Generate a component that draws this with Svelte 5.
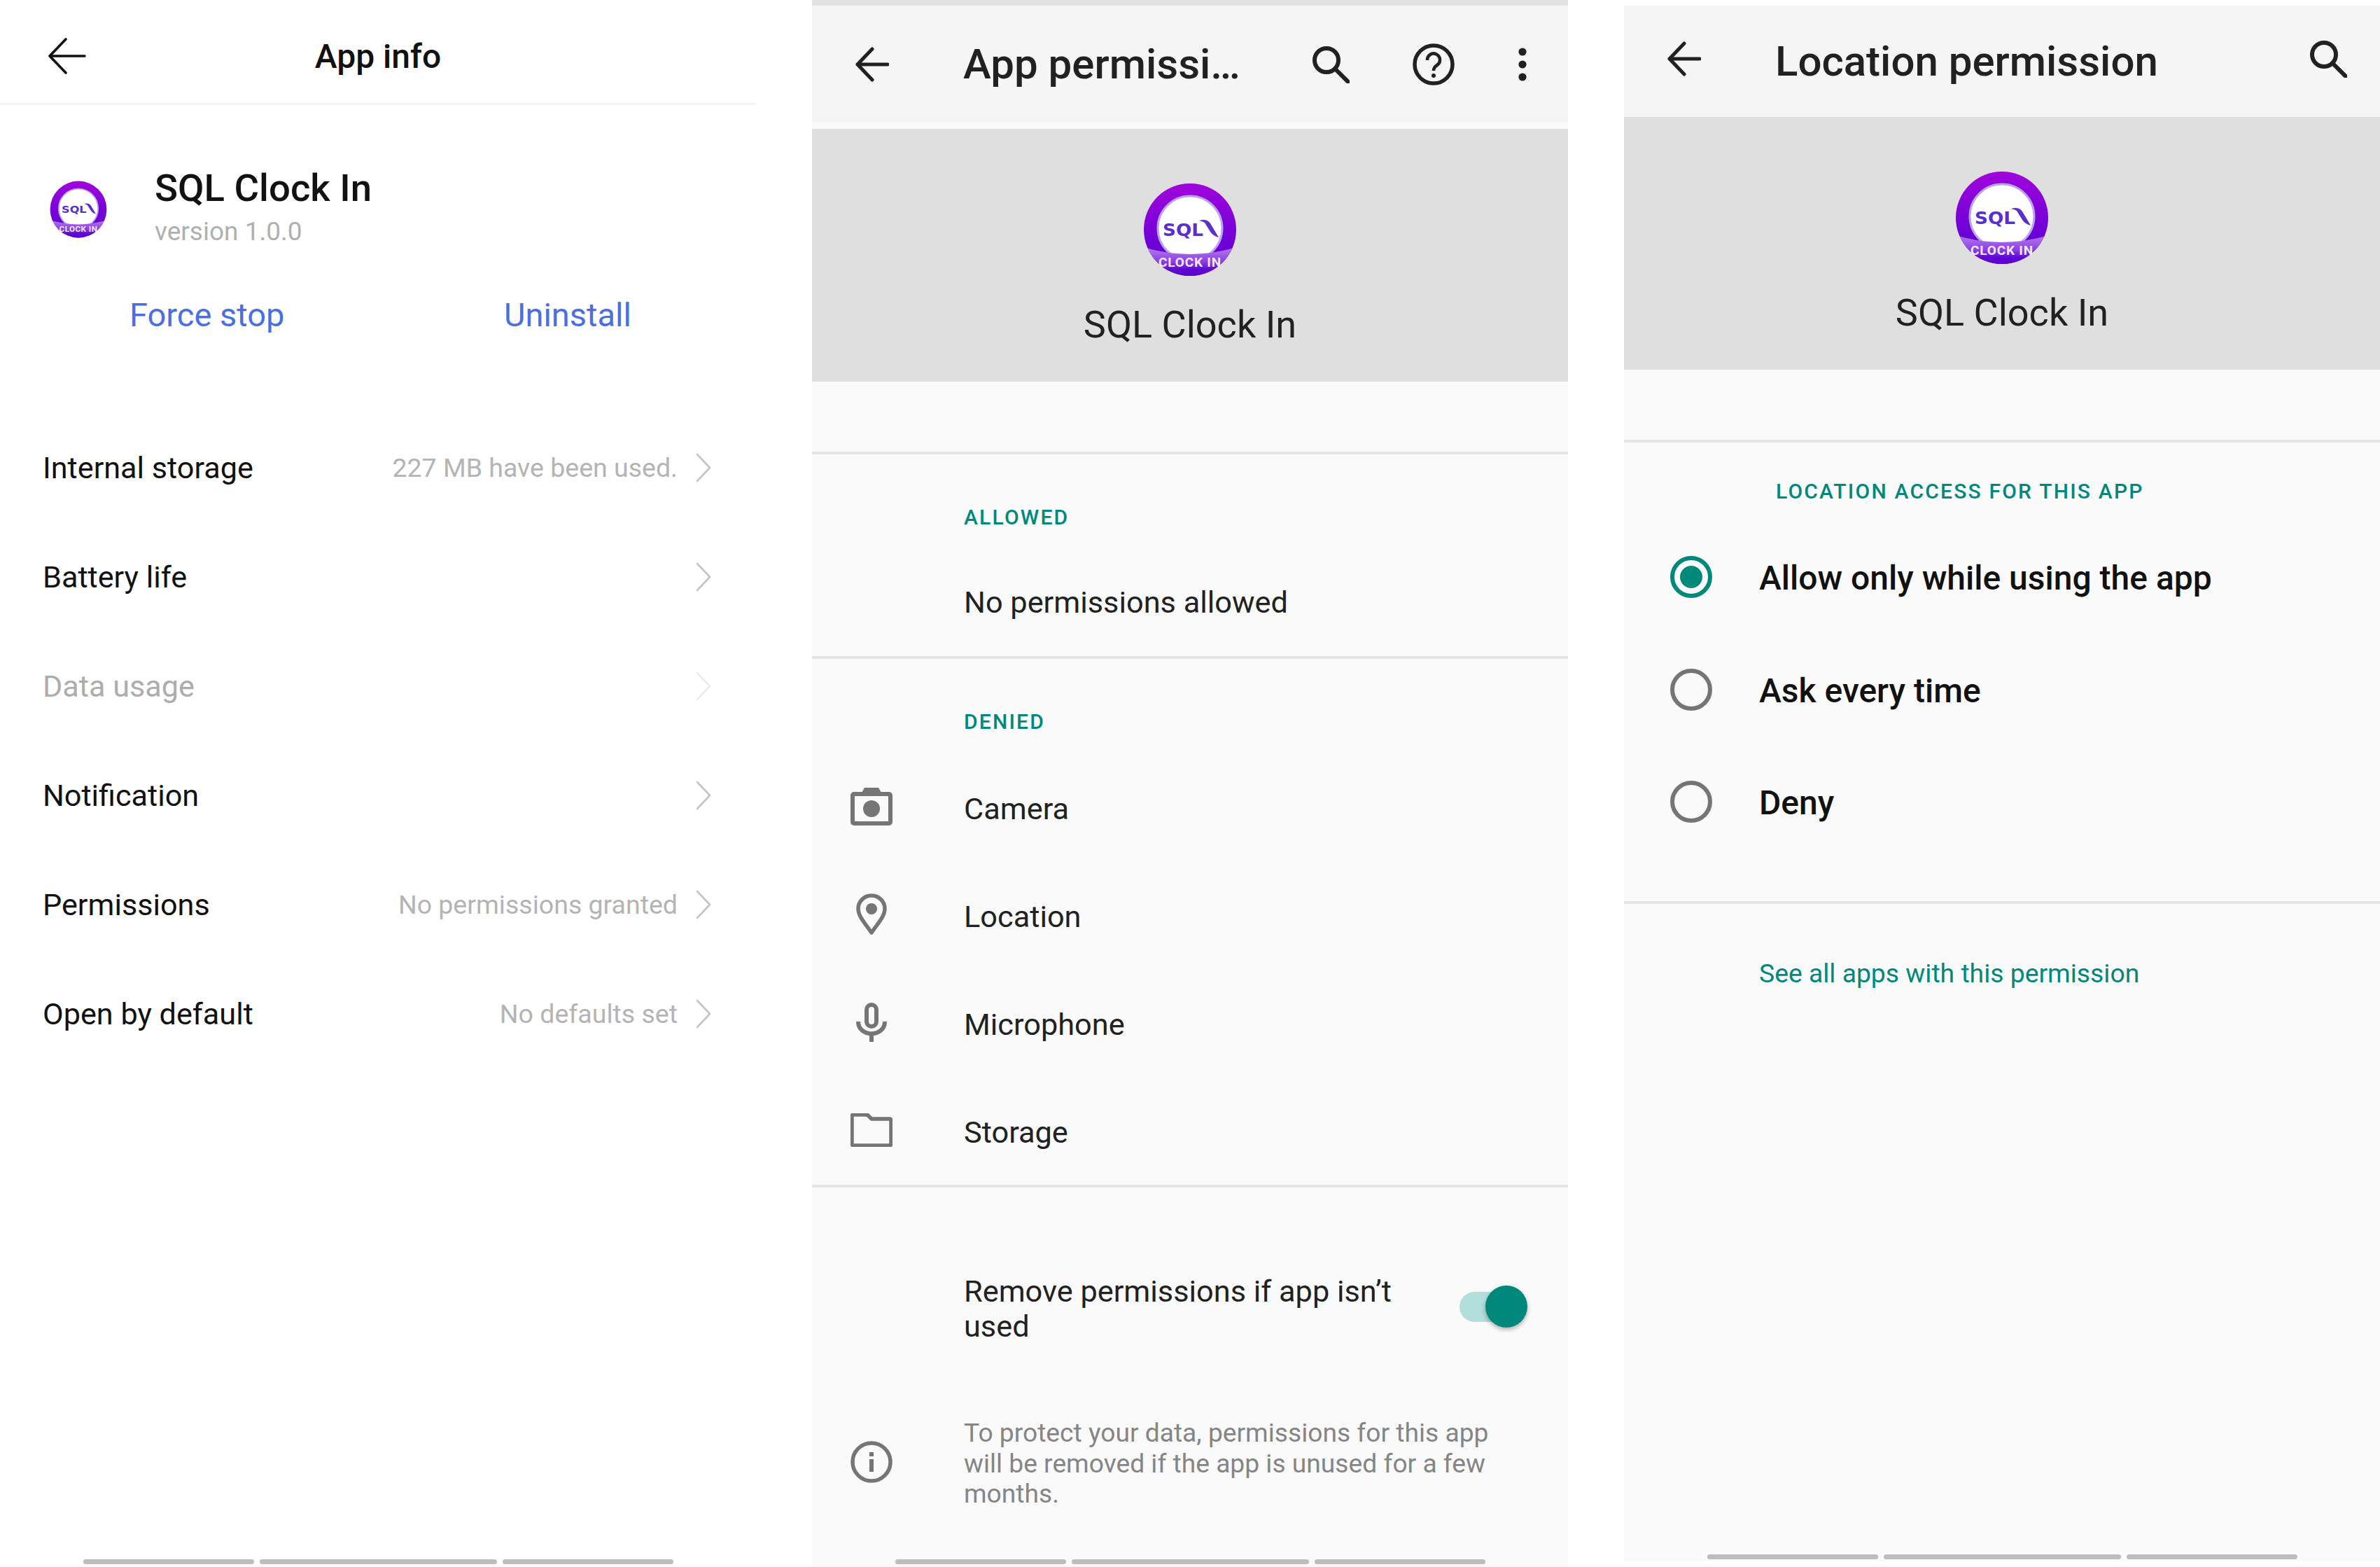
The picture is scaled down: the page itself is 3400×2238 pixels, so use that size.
<script>
  const infoRows = [
    { label: 'Internal storage', value: '227 MB have been used.' },
    { label: 'Battery life' },
    { label: 'Data usage', disabled: true },
    { label: 'Notification' },
    { label: 'Permissions', value: 'No permissions granted' },
    { label: 'Open by default', value: 'No defaults set' },
  ]

  const denied = ['Camera', 'Location', 'Microphone', 'Storage']
  const radios = ['Allow only while using the app', 'Ask every time', 'Deny']
</script>

{#snippet logo(cls)}
  <svg class={cls} viewBox="0 0 134 134" aria-hidden="true">
    <defs>
      <linearGradient id="ring" x1="0" y1="0" x2="0" y2="1">
        <stop offset="0" stop-color="#a005dc" />
        <stop offset="0.7" stop-color="#6a00d6" />
        <stop offset="1" stop-color="#5a00d0" />
      </linearGradient>
      <linearGradient id="band" x1="0" y1="0" x2="0" y2="1">
        <stop offset="0" stop-color="#b47cec" />
        <stop offset="0.5" stop-color="#8a3fe2" />
        <stop offset="0.75" stop-color="#5f08d4" />
        <stop offset="1" stop-color="#5a00d0" />
      </linearGradient>
      <clipPath id="disc"><circle cx="67" cy="67" r="66" /></clipPath>
    </defs>
    <circle cx="67" cy="67" r="66" fill="url(#ring)" />
    <circle cx="67" cy="65" r="46" fill="#fff" stroke="#b9a4ee" stroke-width="3" />
    <path d="M0 92 Q67 112 134 92 V134 H0 Z" fill="url(#band)" clip-path="url(#disc)" />
    <text x="28" y="76" textLength="58" lengthAdjust="spacingAndGlyphs" class="logo-sql">SQL</text>
    <path d="M80 54 Q91 51 96 58 L108 78 Q100 76 96 70 L88 57 Q85 55 80 54 Z" fill="#5a2fd0" />
    <text x="67" y="120" text-anchor="middle" class="logo-clock">CLOCK IN</text>
  </svg>
{/snippet}

{#snippet search()}
  <svg class="tool search" viewBox="0 0 54 54" fill="none" stroke="#212121" stroke-width="6" stroke-linecap="round">
    <circle cx="21" cy="21" r="17" />
    <path d="M33 33 L52 52" />
  </svg>
{/snippet}

{#snippet back(cls)}
  <svg class={cls} viewBox="0 0 48 50" fill="none" stroke="#212121" stroke-width="5" stroke-linecap="round" stroke-linejoin="round">
    <path d="M24 3 L3 25 L24 47 M3 25 H46" />
  </svg>
{/snippet}

{#snippet navbar()}
  <div class="nav">
    <span class="seg side"></span>
    <span class="seg mid"></span>
    <span class="seg side"></span>
  </div>
{/snippet}

<div class="screens">
  <!-- App info -->
  <section class="panel info">
    <header class="info-head">
      <svg class="info-back" viewBox="0 0 54 52" fill="none" stroke="#111" stroke-width="3.6" stroke-linecap="round" stroke-linejoin="round">
        <path d="M25 2 L2 26 L25 50 M2 26 H52" />
      </svg>
      <h1>App info</h1>
    </header>

    <div class="app-row">
      {@render logo('logo-small')}
      <div>
        <div class="app-name">SQL Clock In</div>
        <div class="app-version">version 1.0.0</div>
      </div>
    </div>

    <div class="actions">
      <span class="force">Force stop</span>
      <span class="uninstall">Uninstall</span>
    </div>

    <ul class="info-list">
      {#each infoRows as row}
        <li class:disabled={row.disabled}>
          <span class="label">{row.label}</span>
          {#if row.value}<span class="value">{row.value}</span>{/if}
          <svg class="chev" viewBox="0 0 22 42" fill="none" stroke="currentColor" stroke-width="2.6" stroke-linecap="round" stroke-linejoin="round">
            <path d="M2 2 L20 21 L2 40" />
          </svg>
        </li>
      {/each}
    </ul>

    {@render navbar()}
  </section>

  <!-- App permissions -->
  <section class="panel perms">
    <header class="bar">
      {@render back('bar-back')}
      <h2>App permissi…</h2>
      <div class="tools">
        {@render search()}
        <svg class="tool help" viewBox="0 0 60 60" fill="none" stroke="#212121" stroke-width="5.5">
          <circle cx="30" cy="30" r="27" />
          <path d="M21 24 A9 9 0 1 1 35 31 Q30 34 30 39" stroke-width="4.6" />
          <circle cx="30" cy="46" r="3" fill="#212121" stroke="none" />
        </svg>
        <svg class="tool dots" viewBox="0 0 14 48" fill="#212121">
          <circle cx="7" cy="6" r="5.6" />
          <circle cx="7" cy="24" r="5.6" />
          <circle cx="7" cy="42" r="5.6" />
        </svg>
      </div>
    </header>

    <div class="hero">
      {@render logo('logo-big')}
      <div class="hero-name">SQL Clock In</div>
    </div>

    <div class="group allowed">
      <div class="caption">ALLOWED</div>
      <div class="empty">No permissions allowed</div>
    </div>

    <div class="group denied">
      <div class="caption">DENIED</div>
      <ul class="perm-list">
        {#each denied as name}
          <li>
            <span class="perm-icon">
              {#if name === 'Camera'}
                <svg width="60" height="54" viewBox="0 0 60 54" fill="none">
                  <path d="M16 7 L20 0 H40 L44 7 Z" fill="#757575" />
                  <rect x="3" y="9" width="54" height="42" rx="2" stroke="#757575" stroke-width="6" />
                  <circle cx="30" cy="30" r="12" fill="#757575" />
                </svg>
              {:else if name === 'Location'}
                <svg width="44" height="60" viewBox="0 0 44 60" fill="none">
                  <path d="M22 56 C14 44 3 33 3 22 A19 19 0 0 1 41 22 C41 33 30 44 22 56 Z" stroke="#757575" stroke-width="5.5" stroke-linejoin="round" />
                  <circle cx="22" cy="22" r="8" fill="#757575" />
                </svg>
              {:else if name === 'Microphone'}
                <svg width="44" height="56" viewBox="0 0 44 56" fill="none" stroke="#757575" stroke-width="6">
                  <rect x="15" y="3" width="14" height="31" rx="7" />
                  <path d="M3 27 C3 50 41 50 41 27 M22 43 V56" />
                </svg>
              {:else}
                <svg width="60" height="48" viewBox="0 0 60 48" fill="none">
                  <path d="M4 2 H24 L30 8 H56 A2 2 0 0 1 58 10 V44 A2 2 0 0 1 56 46 H4 A2 2 0 0 1 2 44 V4 A2 2 0 0 1 4 2 Z" stroke="#757575" stroke-width="5.5" stroke-linejoin="round" />
                </svg>
              {/if}
            </span>
            <span class="perm-name">{name}</span>
          </li>
        {/each}
      </ul>
    </div>

    <div class="auto-remove">
      <div class="auto-text">Remove permissions if app isn’t used</div>
      <div class="toggle"><span class="knob"></span></div>
    </div>

    <div class="note">
      <svg class="note-icon" viewBox="0 0 60 60" fill="none">
        <circle cx="30" cy="30" r="27" stroke="#757575" stroke-width="5.5" />
        <rect x="27" y="26" width="6" height="18" fill="#757575" />
        <rect x="27" y="16" width="6" height="6" fill="#757575" />
      </svg>
      <p>To protect your data, permissions for this app will be removed if the app is unused for a few months.</p>
    </div>

    {@render navbar()}
  </section>

  <!-- Location permission -->
  <section class="panel location">
    <header class="bar">
      {@render back('bar-back')}
      <h2>Location permission</h2>
      <div class="tools">{@render search()}</div>
    </header>

    <div class="hero">
      {@render logo('logo-big')}
      <div class="hero-name">SQL Clock In</div>
    </div>

    <div class="group radios">
      <div class="caption">LOCATION ACCESS FOR THIS APP</div>
      <ul class="radio-list">
        {#each radios as text, i}
          <li>
            <span class="radio" class:on={i === 0}></span>
            <span class="radio-text">{text}</span>
          </li>
        {/each}
      </ul>
    </div>

    <a class="see-all" href="#apps">See all apps with this permission</a>

    {@render navbar()}
  </section>
</div>

<style>
  :global(body) {
    margin: 0;
    background: #fff;
  }

  .screens {
    display: flex;
    width: 3400px;
    height: 2238px;
    font-family: Roboto, 'Liberation Sans', sans-serif;
    overflow: hidden;
  }

  .panel {
    position: relative;
    display: flex;
    flex-direction: column;
    box-sizing: border-box;
  }

  h1, h2, p {
    margin: 0;
    font-weight: 500;
  }

  ul {
    margin: 0;
    padding: 0;
    list-style: none;
  }

  /* ── Bottom nav pill ─────────────────────────────────────────────────── */
  .nav {
    position: absolute;
    left: 0;
    right: 0;
    display: flex;
    justify-content: center;
    gap: 8px;
  }

  .seg {
    height: 7px;
    border-radius: 4px;
    background: #bdbdbd;
  }

  .seg.side { width: 244px; }
  .seg.mid { width: 339px; }

  /* ── App info ────────────────────────────────────────────────────────── */
  .info {
    width: 1080px;
    margin-right: 80px;
    background: #fff;
  }

  .info .nav { bottom: 4px; }

  .info-head {
    position: relative;
    height: 150px;
    border-bottom: 3px solid #f6f6f6;
    display: flex;
    align-items: center;
    justify-content: center;
    box-sizing: border-box;
    padding-top: 14px;
  }

  .info-back {
    position: absolute;
    left: 69px;
    top: 54px;
    width: 54px;
    height: 52px;
  }

  h1 {
    font-size: 48px;
    color: #111;
  }

  .app-row {
    display: flex;
    align-items: center;
    gap: 68px;
    padding: 84px 0 0 71px;
  }

  .logo-small {
    width: 82px;
    height: 82px;
    flex: none;
    margin-top: 8px;
  }

  .app-name {
    font-size: 54.5px;
    font-weight: 500;
    line-height: 68px;
    color: #111;
    white-space: nowrap;
  }

  .app-version {
    font-size: 37px;
    line-height: 50px;
    color: #b0b0b0;
    margin-top: 4px;
  }

  .actions {
    display: flex;
    padding: 64px 0 0 185px;
    font-size: 47px;
    line-height: 60px;
    color: #4a6fe3;
  }

  .force { width: 535px; }

  .info-list {
    margin-top: 110px;
  }

  .info-list li {
    display: flex;
    align-items: center;
    height: 156px;
    padding: 0 64px 0 61px;
    color: #c4c4c4;
  }

  .info-list .label {
    font-size: 43.2px;
    color: #111;
    flex: 1;
    white-space: nowrap;
  }

  .info-list li.disabled { color: #ececec; }
  .info-list li.disabled .label { color: #adadad; }

  .value {
    font-size: 37.5px;
    color: #b4b4b4;
    white-space: nowrap;
  }

  .chev {
    width: 22px;
    height: 42px;
    margin-left: 26px;
  }

  /* ── Shared settings bar ─────────────────────────────────────────────── */
  .perms, .location {
    width: 1080px;
    background: #fafafa;
  }

  .perms {
    margin-right: 80px;
    border-top: 8px solid #e2e2e2;
  }

  .location {
    margin-top: 8px;
    height: 2222px;
  }

  .bar {
    display: flex;
    align-items: center;
    background: #f5f5f5;
    padding-left: 62px;
    color: #212121;
  }

  .perms .bar { height: 167px; margin-bottom: 9px; }
  .location .bar { height: 159px; }

  .location .bar-back,
  .location .tools {
    margin-bottom: 8px;
  }

  .bar-back {
    width: 48px;
    height: 50px;
    flex: none;
  }

  h2 {
    font-size: 60px;
    margin-left: 106px;
    white-space: nowrap;
    flex: 1;
  }

  .tools {
    display: flex;
    align-items: center;
  }

  .tool.search {
    width: 54px;
    height: 54px;
  }

  .perms .tools { padding-right: 58px; }
  .location .tools { padding-right: 47px; }

  .help {
    width: 60px;
    height: 60px;
    margin-left: 90px;
  }

  .dots {
    width: 14px;
    height: 48px;
    margin-left: 90px;
  }

  /* ── Hero ────────────────────────────────────────────────────────────── */
  .hero {
    height: 361px;
    background: #dfdfdf;
    display: flex;
    flex-direction: column;
    align-items: center;
    padding-top: 77px;
    box-sizing: border-box;
  }

  .logo-big {
    width: 134px;
    height: 134px;
    flex: none;
  }

  .hero-name {
    font-size: 54px;
    line-height: 64px;
    margin-top: 37px;
    color: #212121;
  }

  :global(.logo-sql) {
    font-family: 'DejaVu Sans', sans-serif;
    font-size: 24px;
    font-weight: 700;
    fill: #5a2fd0;
  }

  :global(.logo-clock) {
    font-family: Roboto, sans-serif;
    font-size: 19px;
    font-weight: 700;
    fill: #f3e8ff;
    letter-spacing: 0.8px;
  }

  /* ── Groups ──────────────────────────────────────────────────────────── */
  .group {
    border-top: 4px solid #e4e4e4;
    box-sizing: border-box;
    padding-left: 217px;
  }

  .caption {
    font-size: 30px;
    font-weight: 500;
    line-height: 36px;
    letter-spacing: 2.2px;
    color: #00897b;
    white-space: nowrap;
  }

  .allowed {
    margin-top: 100px;
    height: 292px;
    padding-top: 72px;
  }

  .empty {
    font-size: 43.3px;
    line-height: 52px;
    color: #212121;
    margin-top: 78px;
  }

  .denied {
    height: 755px;
    padding-left: 0;
    padding-top: 72px;
  }

  .denied .caption { padding-left: 217px; }

  .perm-list {
    margin-top: 29px;
  }

  .perm-list li {
    display: flex;
    align-items: center;
    height: 154px;
  }

  .perm-icon {
    width: 217px;
    padding-left: 55px;
    box-sizing: border-box;
    display: flex;
    align-items: center;
    flex: none;
    margin-bottom: 6px;
  }

  .perm-icon svg {
    display: block;
  }

  .perm-list li:nth-child(2) .perm-icon,
  .perm-list li:nth-child(3) .perm-icon {
    padding-left: 63px;
  }

  .perm-name {
    font-size: 43.3px;
    color: #212121;
  }

  .auto-remove {
    border-top: 4px solid #e4e4e4;
    display: flex;
    align-items: flex-start;
    padding: 124px 70px 0 217px;
  }

  .auto-text {
    width: 640px;
    font-size: 43.3px;
    line-height: 50px;
    color: #212121;
  }

  .toggle {
    position: relative;
    width: 85px;
    height: 43px;
    margin-left: auto;
    margin-top: 25px;
    border-radius: 22px;
    background: #b2dfdb;
  }

  .knob {
    position: absolute;
    right: -12px;
    top: -9px;
    width: 60px;
    height: 60px;
    border-radius: 50%;
    background: #00897b;
    box-shadow: 0 3px 6px rgba(0, 0, 0, 0.3);
  }

  .note {
    display: flex;
    align-items: center;
    padding: 105px 70px 0 55px;
  }

  .note-icon {
    width: 60px;
    height: 60px;
    flex: none;
    margin-right: 102px;
    margin-bottom: 5px;
  }

  .note p {
    font-size: 37.2px;
    font-weight: 400;
    line-height: 43.5px;
    color: #858585;
  }

  .perms .nav { bottom: 4px; }
  .location .nav { bottom: 3px; }

  /* ── Location permission ─────────────────────────────────────────────── */
  .radios {
    margin-top: 100px;
    padding-left: 0;
    padding-top: 52px;
    height: 663px;
    border-bottom: 4px solid #e4e4e4;
  }

  .radios .caption {
    padding-left: 217px;
  }

  .radio-list {
    margin-top: 24px;
  }

  .radio-list li {
    display: flex;
    align-items: center;
    height: 160.5px;
  }

  .radio {
    position: relative;
    width: 60px;
    height: 60px;
    margin-left: 66px;
    margin-right: 67px;
    box-sizing: border-box;
    border: 6px solid #757575;
    border-radius: 50%;
    flex: none;
  }

  .radio.on {
    border-color: #00897b;
  }

  .radio.on::after {
    content: '';
    position: absolute;
    inset: 8px;
    border-radius: 50%;
    background: #00897b;
  }

  .radio-text {
    font-size: 48px;
    font-weight: 500;
    color: #111;
    white-space: nowrap;
    padding-top: 3px;
  }

  .see-all {
    display: block;
    margin: 74px 0 0 193px;
    font-size: 37.3px;
    line-height: 50px;
    color: #00897b;
    text-decoration: none;
  }
</style>
